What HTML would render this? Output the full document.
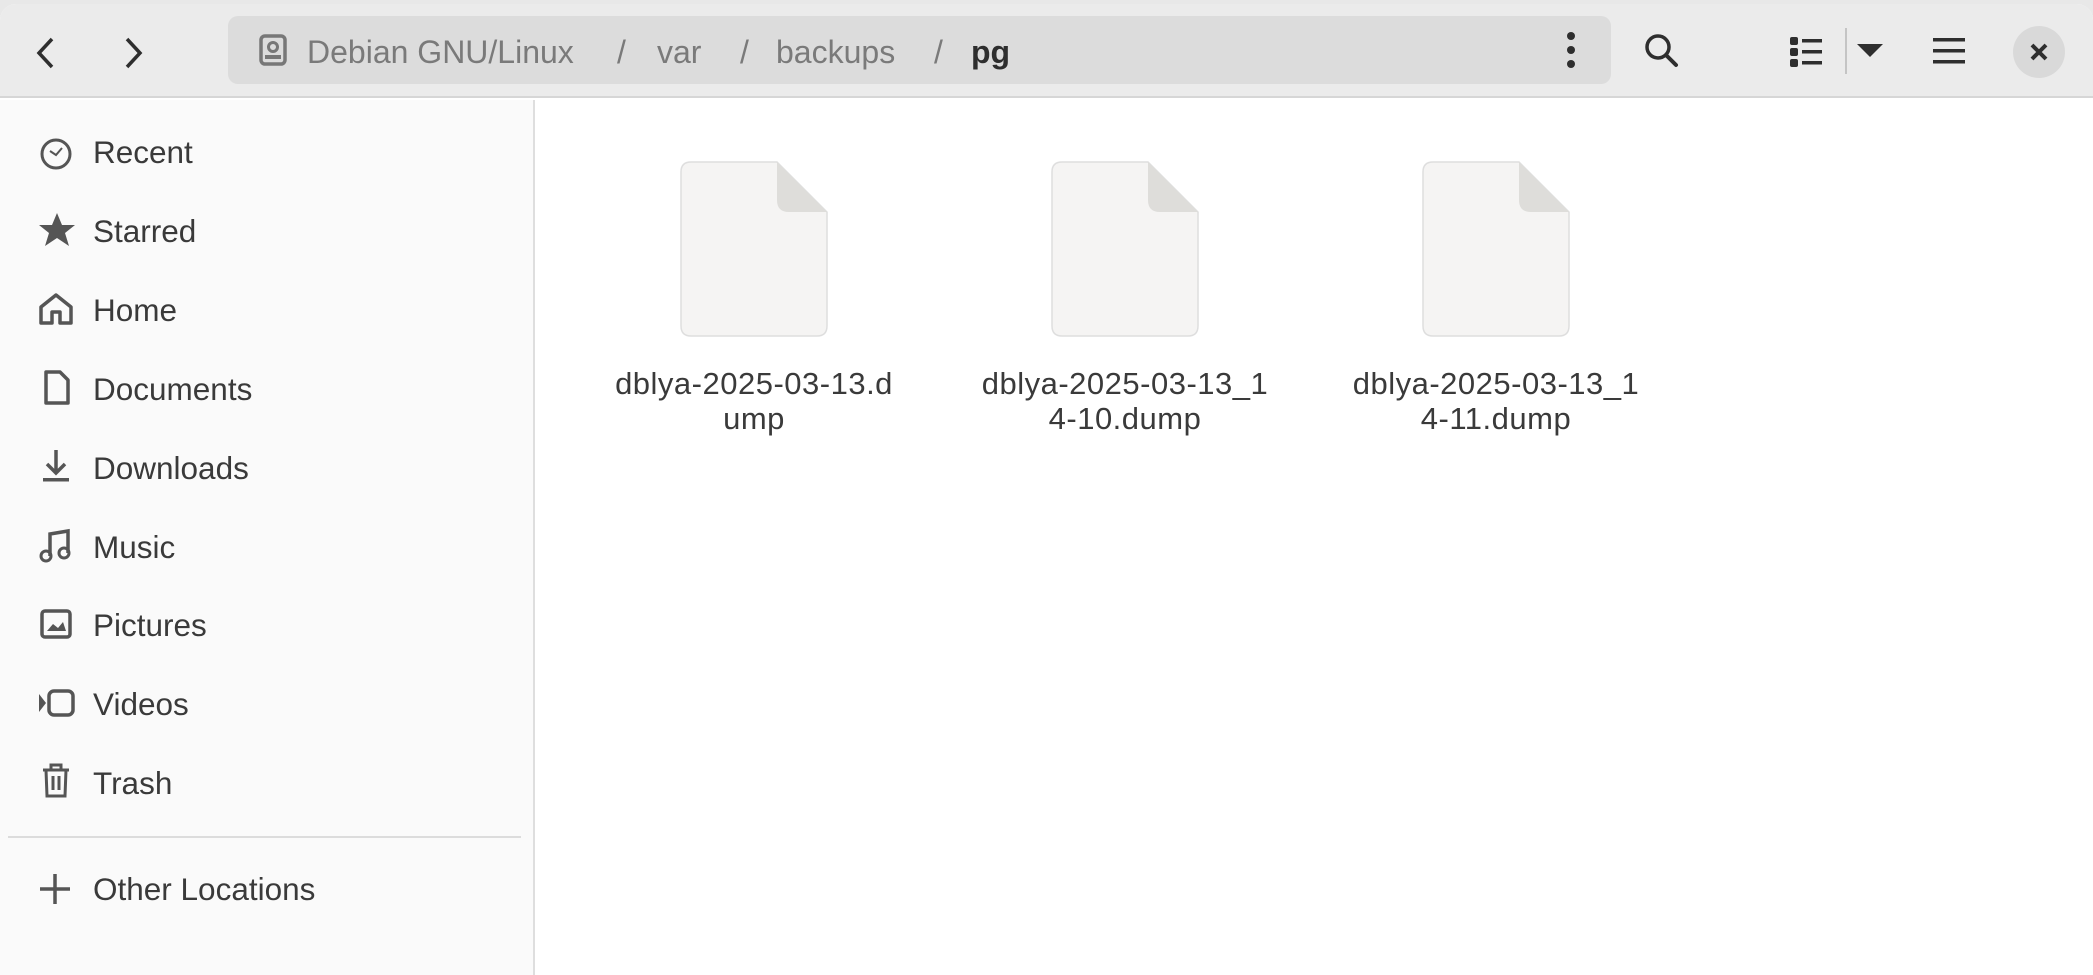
<!DOCTYPE html>
<html><head><meta charset="utf-8"><style>
*{margin:0;padding:0;box-sizing:border-box}
body{width:2093px;height:975px;overflow:hidden;background:#e8e8e8;font-family:"Liberation Sans",sans-serif;position:relative}
.win{position:absolute;left:0;top:4px;width:2093px;height:971px;background:#fff;border-radius:16px 16px 0 0;overflow:hidden}
.hdr{position:absolute;left:0;top:0;width:2093px;height:94px;background:#ebebeb;border-bottom:2px solid #d6d6d6}
.path{position:absolute;left:228px;top:12px;width:1383px;height:68px;background:#dcdcdc;border-radius:10px}
.pt{position:absolute;top:20px;font-size:32px;color:#7a7a7a;line-height:1}
.side{position:absolute;left:0;top:96px;width:535px;height:880px;background:#fafafa;border-right:2px solid #dedede}
.it{position:absolute;left:93px;font-size:31.5px;color:#3a3a3a;line-height:1}
.ic{position:absolute;left:38px}
.f{position:absolute;top:156px;width:150px;height:178px}
.fl{position:absolute;top:362px;width:340px;text-align:center;font-size:31px;color:#3a3a3a;line-height:35px;letter-spacing:0.5px}
</style></head><body>
<div class="win">
<div class="hdr">
<svg style="position:absolute;left:32px;top:32px" width="26" height="34" viewBox="0 0 26 34"><path d="M20 3 L7 17 L20 31" stroke="#2e2e2e" stroke-width="3.5" fill="none"/></svg>
<svg style="position:absolute;left:121px;top:32px" width="26" height="34" viewBox="0 0 26 34"><path d="M6 3 L19 17 L6 31" stroke="#2e2e2e" stroke-width="3.5" fill="none"/></svg>
<div class="path">
<svg style="position:absolute;left:31px;top:18px" width="28" height="32" viewBox="0 0 28 32"><rect x="2" y="2" width="24" height="28" rx="4" fill="none" stroke="#777" stroke-width="3.5"/><circle cx="14" cy="13" r="4.5" fill="none" stroke="#777" stroke-width="3"/><rect x="6" y="21" width="16" height="4" fill="#777"/></svg>
<div class="pt" style="left:79px">Debian GNU/Linux</div>
<div class="pt" style="left:389px">/</div>
<div class="pt" style="left:429px">var</div>
<div class="pt" style="left:512px">/</div>
<div class="pt" style="left:548px">backups</div>
<div class="pt" style="left:706px">/</div>
<div class="pt" style="left:743px;color:#2e2e2e;font-weight:bold">pg</div>
<svg style="position:absolute;left:1336px;top:14px" width="14" height="40" viewBox="0 0 14 40"><circle cx="7" cy="6" r="4" fill="#2e2e2e"/><circle cx="7" cy="20" r="4" fill="#2e2e2e"/><circle cx="7" cy="34" r="4" fill="#2e2e2e"/></svg>
</div>
<svg style="position:absolute;left:1643px;top:28px" width="38" height="38" viewBox="0 0 38 38"><circle cx="15" cy="15" r="11" fill="none" stroke="#2e2e2e" stroke-width="3.5"/><path d="M23 23 L33 33" stroke="#2e2e2e" stroke-width="4" stroke-linecap="round"/></svg>
<svg style="position:absolute;left:1790px;top:32px" width="34" height="32" viewBox="0 0 34 32"><rect x="0" y="1" width="8" height="8" rx="2" fill="#2e2e2e"/><rect x="0" y="12" width="8" height="8" rx="2" fill="#2e2e2e"/><rect x="0" y="23" width="8" height="8" rx="2" fill="#2e2e2e"/><rect x="12" y="3" width="20" height="3.5" fill="#2e2e2e"/><rect x="12" y="14" width="20" height="3.5" fill="#2e2e2e"/><rect x="12" y="25" width="20" height="3.5" fill="#2e2e2e"/></svg>
<div style="position:absolute;left:1845px;top:24px;width:2px;height:46px;background:#c4c4c4"></div>
<svg style="position:absolute;left:1857px;top:40px" width="26" height="14" viewBox="0 0 26 14"><path d="M0 0 L26 0 L13 13 Z" fill="#2e2e2e"/></svg>
<svg style="position:absolute;left:1933px;top:32px" width="32" height="30" viewBox="0 0 32 30"><rect y="2" width="32" height="3.5" fill="#2e2e2e"/><rect y="13" width="32" height="3.5" fill="#2e2e2e"/><rect y="24" width="32" height="3.5" fill="#2e2e2e"/></svg>
<div style="position:absolute;left:2013px;top:22px;width:52px;height:52px;border-radius:50%;background:#d9d9d9"></div>
<svg style="position:absolute;left:2030px;top:39px" width="18" height="18" viewBox="0 0 18 18"><path d="M2 2 L16 16 M16 2 L2 16" stroke="#2e2e2e" stroke-width="4"/></svg>
</div>
<div class="side">
<svg class="ic" style="top:36px" width="36" height="36" viewBox="0 0 36 36"><circle cx="18" cy="18" r="14" fill="none" stroke="#555" stroke-width="3"/><path d="M12 15 L18 19 L24 12" fill="none" stroke="#555" stroke-width="2"/></svg>
<div class="it" style="top:37px">Recent</div>
<svg class="ic" style="top:112px" width="38" height="36" viewBox="0 0 38 36"><path d="M19 1 L24 13 L37 13 L27 21 L31 34 L19 26 L7 34 L11 21 L1 13 L14 13 Z" fill="#555"/></svg>
<div class="it" style="top:116px">Starred</div>
<svg class="ic" style="top:192px" width="36" height="34" viewBox="0 0 36 34"><path d="M3 15 L18 3 L33 15 L33 31 L22 31 L22 20 L14 20 L14 31 L3 31 Z" fill="none" stroke="#555" stroke-width="3.5" stroke-linejoin="round"/></svg>
<div class="it" style="top:195px">Home</div>
<svg class="ic" style="top:270px" width="36" height="36" viewBox="0 0 36 36"><path d="M8 2 L22 2 L30 10 L30 33 L8 33 Z" fill="none" stroke="#555" stroke-width="3.5" stroke-linejoin="round"/></svg>
<div class="it" style="top:274px">Documents</div>
<svg class="ic" style="top:348px" width="36" height="36" viewBox="0 0 36 36"><path d="M18 2 L18 24 M9 16 L18 25 L27 16" fill="none" stroke="#555" stroke-width="3.5"/><rect x="5" y="30" width="26" height="3.5" fill="#555"/></svg>
<div class="it" style="top:353px">Downloads</div>
<svg class="ic" style="top:428px" width="36" height="36" viewBox="0 0 36 36"><path d="M12 28 L12 6 L30 3 L30 25" fill="none" stroke="#555" stroke-width="3.5"/><circle cx="8" cy="28" r="5" fill="none" stroke="#555" stroke-width="3"/><circle cx="26" cy="25" r="5" fill="none" stroke="#555" stroke-width="3"/></svg>
<div class="it" style="top:432px">Music</div>
<svg class="ic" style="top:506px" width="36" height="36" viewBox="0 0 36 36"><rect x="4" y="5" width="28" height="26" rx="3" fill="none" stroke="#555" stroke-width="3.5"/><path d="M9 25 L15 18 L20 22 L25 16 L28 25 Z" fill="#555"/></svg>
<div class="it" style="top:510px">Pictures</div>
<svg class="ic" style="top:586px" width="38" height="34" viewBox="0 0 38 34"><path d="M1 8 L8 17 L1 26 Z" fill="#555"/><rect x="11" y="5" width="24" height="24" rx="5" fill="none" stroke="#555" stroke-width="3.5"/></svg>
<div class="it" style="top:589px">Videos</div>
<svg class="ic" style="top:662px" width="36" height="38" viewBox="0 0 36 38"><path d="M5 8 L31 8 M13 8 L13 3 L23 3 L23 8 M8 8 L9 34 L27 34 L28 8 M15 14 L15 28 M21 14 L21 28" fill="none" stroke="#555" stroke-width="3"/></svg>
<div class="it" style="top:668px">Trash</div>
<div style="position:absolute;left:8px;top:736px;width:513px;height:2px;background:#dcdcdc"></div>
<svg class="ic" style="top:772px" width="34" height="34" viewBox="0 0 34 34"><path d="M17 2 L17 32 M2 17 L32 17" stroke="#555" stroke-width="3.5"/></svg>
<div class="it" style="top:774px">Other Locations</div>
</div>
<svg class="f" style="left:679px" viewBox="0 0 150 178"><path d="M12 2 L98 2 L148 52 L148 166 Q148 176 138 176 L12 176 Q2 176 2 166 L2 12 Q2 2 12 2 Z" fill="#f5f4f3" stroke="#dedede" stroke-width="1.5"/><path d="M98 2 L98 40 Q98 52 110 52 L148 52 Z" fill="#deddda"/></svg>
<div class="fl" style="left:584px">dblya-2025-03-13.d<br>ump</div>
<svg class="f" style="left:1050px" viewBox="0 0 150 178"><path d="M12 2 L98 2 L148 52 L148 166 Q148 176 138 176 L12 176 Q2 176 2 166 L2 12 Q2 2 12 2 Z" fill="#f5f4f3" stroke="#dedede" stroke-width="1.5"/><path d="M98 2 L98 40 Q98 52 110 52 L148 52 Z" fill="#deddda"/></svg>
<div class="fl" style="left:955px">dblya-2025-03-13_1<br>4-10.dump</div>
<svg class="f" style="left:1421px" viewBox="0 0 150 178"><path d="M12 2 L98 2 L148 52 L148 166 Q148 176 138 176 L12 176 Q2 176 2 166 L2 12 Q2 2 12 2 Z" fill="#f5f4f3" stroke="#dedede" stroke-width="1.5"/><path d="M98 2 L98 40 Q98 52 110 52 L148 52 Z" fill="#deddda"/></svg>
<div class="fl" style="left:1326px">dblya-2025-03-13_1<br>4-11.dump</div>
</div>
</body></html>
